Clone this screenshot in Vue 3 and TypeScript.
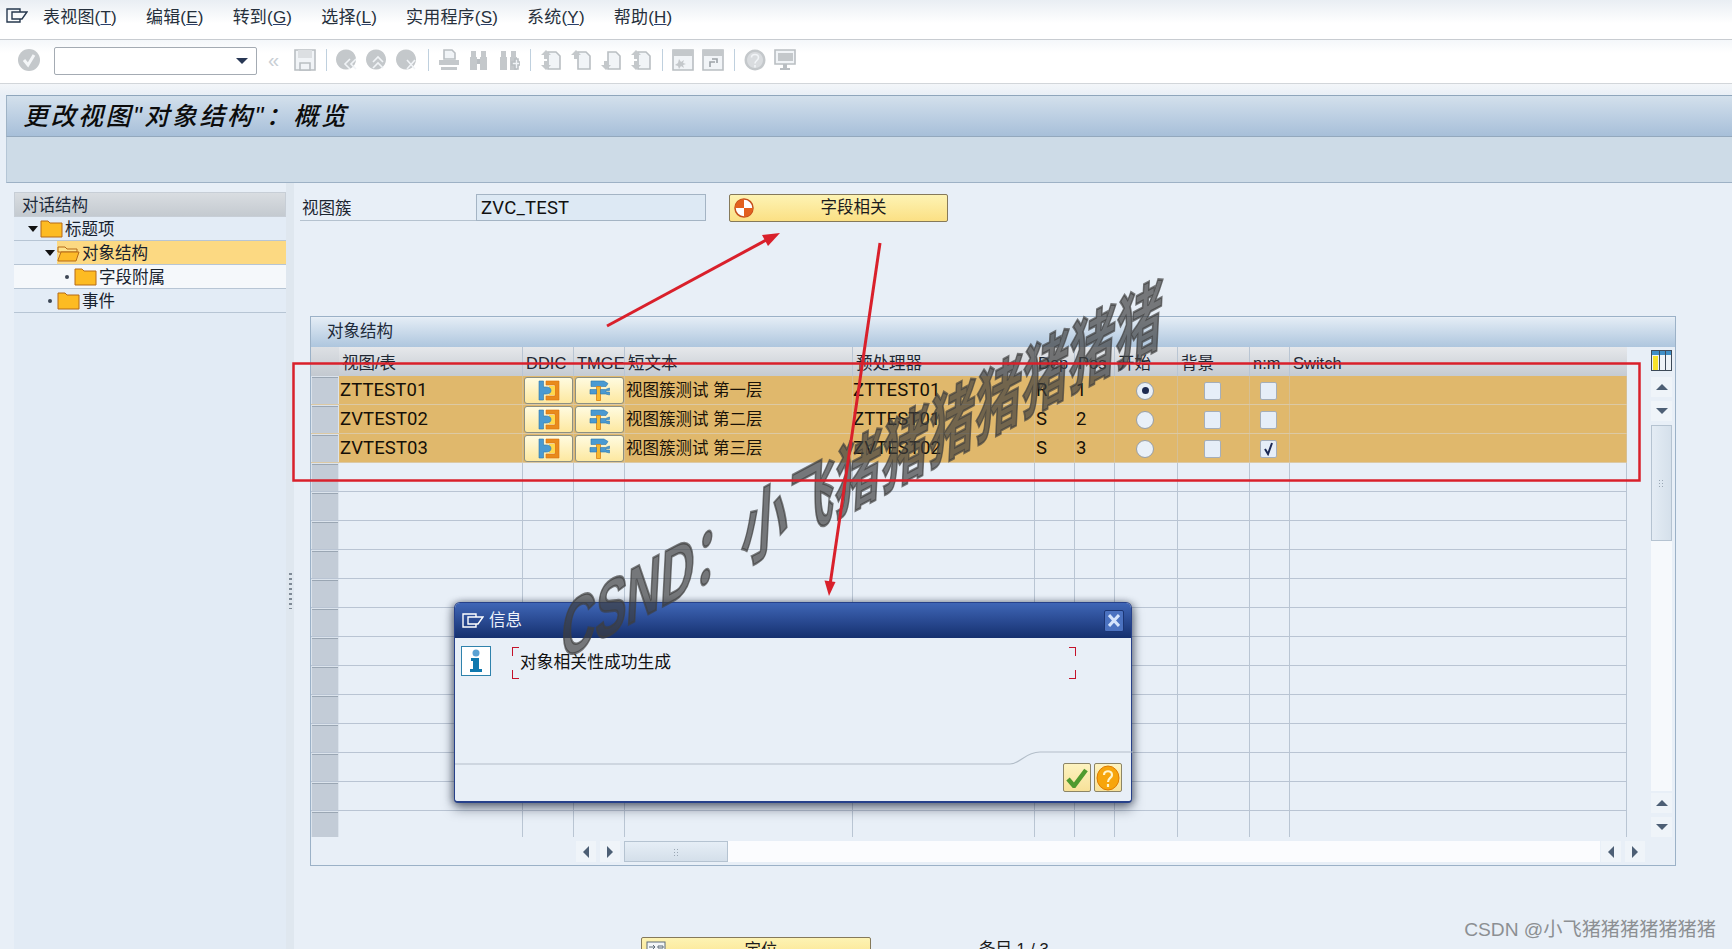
<script setup lang="ts">
interface Row { name: string; text: string; proc: string; dep: string; pos: string; start: boolean; nm: boolean }
interface Part { d: string; fill?: string; stroke?: string }
interface ToolIcon { sep?: boolean; parts?: Part[] }

const menus = [
  { label: '表视图(', key: 'T' }, { label: '编辑(', key: 'E' }, { label: '转到(', key: 'G' }, { label: '选择(', key: 'L' },
  { label: '实用程序(', key: 'S' }, { label: '系统(', key: 'Y' }, { label: '帮助(', key: 'H' },
]

const data: Row[] = [
  { name: 'ZTTEST01', text: '视图簇测试 第一层', proc: 'ZTTEST01', dep: 'R', pos: '1', start: true, nm: false },
  { name: 'ZVTEST02', text: '视图簇测试 第二层', proc: 'ZTTEST01', dep: 'S', pos: '2', start: false, nm: false },
  { name: 'ZVTEST03', text: '视图簇测试 第三层', proc: 'ZVTEST02', dep: 'S', pos: '3', start: false, nm: true },
]
const emptyRows = 13

const tree = [
  { label: '标题项', level: 0, open: true, sel: false, tone: 'a' },
  { label: '对象结构', level: 1, open: true, sel: true, tone: 'a' },
  { label: '字段附属', level: 2, open: false, sel: false, tone: 'b' },
  { label: '事件', level: 1, open: false, sel: false, tone: 'a' },
]

const G = '#c4c8cb'
const L = '#f1f4f7'
const O = '#b9bec2'
const circle = 'M10 .5a10 10 0 1 0 .01 0z'
const page = 'M8 3h8l4 4v13H8z'
const up = 'M6 1l5 5H8v4H4V6H1z'
const down = 'M4 12h4v4h3l-5 5-5-5h3z'
const tools: ToolIcon[] = [
  { parts: [{ d: 'M1 1h20v20H1z', fill: L, stroke: O }, { d: 'M4 1h14v8H4z', fill: '#dcdfe2' }, { d: 'M6 14h10v7H6z', fill: L, stroke: O }] },
  { sep: true },
  { parts: [{ d: circle, fill: G }, { d: 'M14 10l-5 5 5 5M20 10l-5 5 5 5', stroke: L }] },
  { parts: [{ d: circle, fill: G }, { d: 'M7 13l5-5 5 5M7 19l5-5 5 5', stroke: L }] },
  { parts: [{ d: circle, fill: G }, { d: 'M11 11l8 9M19 11l-8 9', stroke: L }] },
  { sep: true },
  { parts: [{ d: 'M6 1h8l3 3v6H6z', fill: L, stroke: O }, { d: 'M1 11h20v5H1z', fill: G }, { d: 'M3 18h16v3H3z', fill: G }] },
  { parts: [{ d: 'M3 2h5v6h1v13H2V8h1zM13 2h5v6h1v13h-7V8h1z', fill: G }, { d: 'M9 10h3v5H9z', fill: O }] },
  { parts: [{ d: 'M3 2h5v6h1v13H2V8h1zM13 2h5v6h1v13h-7V8h1z', fill: G }, { d: 'M14 13h3v-3h3v3h2v3h-2v4h-3v-4h-3z', fill: L, stroke: O }] },
  { sep: true },
  { parts: [{ d: page, fill: L, stroke: O }, { d: up, fill: G }, { d: down, fill: G }] },
  { parts: [{ d: page, fill: L, stroke: O }, { d: up, fill: G }] },
  { parts: [{ d: page, fill: L, stroke: O }, { d: down, fill: G }] },
  { parts: [{ d: page, fill: L, stroke: O }, { d: up, fill: G }, { d: down, fill: G }] },
  { sep: true },
  { parts: [{ d: 'M1 1h20v20H1z', fill: L, stroke: O }, { d: 'M1 1h20v6H1z', fill: G }, { d: 'M7 10l2 3 3-2-1 3 3 1-3 1 1 3-3-2-2 3-1-3-3-1 3-2z', fill: G }] },
  { parts: [{ d: 'M1 1h20v20H1z', fill: L, stroke: O }, { d: 'M1 1h20v6H1z', fill: G }, { d: 'M8 18v-5h5M10 10h5v4', stroke: '#9da3a8' }] },
  { sep: true },
  { parts: [{ d: 'M11 .5a10.5 10.5 0 1 0 .01 0z', fill: G }, { d: 'M11 3a8 8 0 1 0 .01 0z', fill: '#d9dcdf' }, { d: 'M7.500 8.500c0-4 7-4 7 0 0 3-3.500 3-3.500 6M11 16v2.500', stroke: L }] },
  { parts: [{ d: 'M1 1h20v14H1z', fill: L, stroke: O }, { d: 'M4 4h15v8H4z', fill: G }, { d: 'M9 15h4v4h3v2H6v-2h3z', fill: O }] },
]
</script>

<template>
  <div class="page">
    <header class="menubar">
      <svg class="app-icon" width="22" height="15" viewBox="0 0 22 15" fill="none" stroke="#26384e" stroke-width="1.4">
        <path d="M14 4V1H1v13h13v-3M6 4h15l-5 7H6z" />
      </svg>
      <nav class="menus">
        <span v-for="m in menus" :key="m.key" class="menu">{{ m.label }}<u>{{ m.key }}</u>)</span>
      </nav>
    </header>

    <div class="toolbar">
      <svg class="ok-icon" width="22" height="22" viewBox="0 0 22 22">
        <circle cx="11" cy="11" r="11" fill="#c4c8cb" />
        <path d="M6 11l4 5 6-10" fill="none" stroke="#f4f6f8" stroke-width="3" />
      </svg>
      <div class="combo"><i class="tri-down dark"></i></div>
      <span class="chev">«</span>
      <div class="tools">
        <template v-for="(t, i) in tools" :key="i">
          <span v-if="t.sep" class="tool-sep"></span>
          <svg v-else width="22" height="22" viewBox="0 0 22 22" stroke-width="1.6">
            <path v-for="(p, n) in t.parts" :key="n" :d="p.d" :fill="p.fill ?? 'none'" :stroke="p.stroke ?? 'none'" />
          </svg>
        </template>
      </div>
    </div>

    <div class="title-gap"></div>
    <h1 class="title">更改视图"对象结构"：概览</h1>
    <div class="app-toolbar"></div>

    <div class="body">
      <aside class="tree">
        <div class="tree-head">对话结构</div>
        <div v-for="n in tree" :key="n.label" class="tree-row" :class="['tone-' + n.tone, 'lv-' + n.level]">
          <span class="expander">
            <i v-if="n.open" class="tri-down black"></i>
            <i v-else class="dot"></i>
          </span>
          <span class="node" :class="{ sel: n.sel }">
            <svg width="23" height="18" viewBox="0 0 23 18">
              <template v-if="n.sel">
                <path d="M1 3h7l2 2h10v3H1z" fill="#ffe38a" stroke="#b56a18" />
                <path d="M1 16l3-8h18l-3 9H1z" fill="#fdbb28" stroke="#b56a18" />
              </template>
              <path v-else d="M1 1h7l2 2h12v14H1z" fill="#fdbb22" stroke="#b56a18" />
            </svg>
            <span class="node-label">{{ n.label }}</span>
          </span>
        </div>
      </aside>

      <div class="sash"><span class="sash-grip"></span></div>

      <main class="main">
        <div class="form-row">
          <label class="form-label">视图簇</label>
          <div class="form-value">ZVC_TEST</div>
          <button class="btn-wide field-btn">
            <svg width="20" height="20" viewBox="0 0 20 20">
              <circle cx="10" cy="10" r="9" fill="#fff" stroke="#c5501c" stroke-width="1.5" />
              <path d="M10 1a9 9 0 0 0-9 9h9zM10 10h9a9 9 0 0 1-9 9z" fill="#e2601e" />
            </svg>
            <span class="btn-text">字段相关</span>
          </button>
        </div>

        <section class="tc">
          <div class="tc-title">对象结构</div>
          <div class="tc-main">
            <div class="grid">
              <div class="tr th">
                <div class="sel-cell"></div>
                <div class="c">视图/表</div><div class="c">DDIC</div><div class="c">TMGE</div><div class="c">短文本</div>
                <div class="c">预处理器</div><div class="c">Dep</div><div class="c">Pos</div><div class="c">开始</div>
                <div class="c">背景</div><div class="c">n:m</div><div class="c">Switch</div>
              </div>
              <div v-for="r in data" :key="r.name" class="tr td picked">
                <div class="sel-cell"><span></span></div>
                <div class="c mono">{{ r.name }}</div>
                <div class="c cbtn">
                  <button class="cell-btn">
                    <svg width="23" height="21" viewBox="0 0 23 21">
                      <path d="M9 1h13v19H9v-4h9V5H9z" fill="#e98a1c" stroke="#d96e10" stroke-width=".6" />
                      <path d="M12 6h6v9h-6z" fill="#ffd84d" />
                      <path d="M2 1h4.500v6h2.500c3 0 5 1 5 3.500S12 14 9 14H6.500v6H2z" fill="#4a9ad2" stroke="#2d77ad" stroke-width=".6" />
                    </svg>
                  </button>
                </div>
                <div class="c cbtn">
                  <button class="cell-btn">
                    <svg width="23" height="21" viewBox="0 0 23 21">
                      <path d="M3 1h13l4 2.500L18 6.500H3z" fill="#4a9ad2" stroke="#2d77ad" stroke-width=".6" />
                      <path d="M8.500 6.500h4v14h-4z" fill="#f5b82e" stroke="#dc7f12" stroke-width=".8" />
                      <path d="M2 9.500h6.500V14H2z" fill="#4a9ad2" stroke="#2d77ad" stroke-width=".6" />
                      <path d="M12.500 9.500h5l4-1.500v2.500h-3.500v1.500H21.500V15l-4-1h-5z" fill="#4a9ad2" stroke="#2d77ad" stroke-width=".6" />
                    </svg>
                  </button>
                </div>
                <div class="c cjk">{{ r.text }}</div>
                <div class="c mono proc">{{ r.proc }}</div>
                <div class="c mono">{{ r.dep }}</div>
                <div class="c mono">{{ r.pos }}</div>
                <div class="c center"><span class="radio" :class="{ on: r.start }"></span></div>
                <div class="c center"><span class="check"></span></div>
                <div class="c center">
                  <span class="check">
                    <svg v-if="r.nm" width="13" height="15" viewBox="0 0 13 15"><path d="M3 8l3 5 4-11" fill="none" stroke="#1c2a55" stroke-width="2" /></svg>
                  </span>
                </div>
                <div class="c"></div>
              </div>
              <div v-for="n in emptyRows" :key="n" class="tr td">
                <div class="sel-cell"><span></span></div>
                <div v-for="k in 11" :key="k" class="c"></div>
              </div>
            </div>
            <div class="vscroll">
              <svg class="cols-icon" width="21" height="21" viewBox="0 0 21 21">
                <rect x=".5" y=".5" width="20" height="20" fill="#eef3f7" stroke="#3d4a58" />
                <rect x="1" y="1" width="19" height="4" fill="#3f8fc6" />
                <rect x="2" y="6" width="5" height="14" fill="#f7e32a" />
                <path d="M8.500 1v19M14.500 1v19" stroke="#3d4a58" />
              </svg>
              <span class="arrow-v"><i class="tri-up"></i></span>
              <span class="arrow-v"><i class="tri-down"></i></span>
              <div class="v-track">
                <div class="v-thumb"><i class="grip"></i></div>
              </div>
              <span class="arrow-v"><i class="tri-up"></i></span>
              <span class="arrow-v"><i class="tri-down"></i></span>
            </div>
          </div>
          <div class="hscroll">
            <span class="arrow-h"><i class="tri-left"></i></span>
            <span class="arrow-h"><i class="tri-right"></i></span>
            <div class="h-track">
              <div class="h-thumb"><i class="grip"></i></div>
            </div>
            <span class="arrow-h"><i class="tri-left"></i></span>
            <span class="arrow-h"><i class="tri-right"></i></span>
          </div>
        </section>

        <div class="bottom-row">
          <button class="btn-wide locate-btn">
            <svg width="20" height="20" viewBox="0 0 20 20">
              <rect x="1" y="1" width="18" height="18" fill="#f3f6f8" stroke="#5d6a78" />
              <path d="M3 6h6M7 4l2 2-2 2M12 5h5v2h-5z" fill="none" stroke="#5d6a78" />
            </svg>
            <span class="btn-text">定位</span>
          </button>
          <span class="entry">条目 1 / 3</span>
        </div>
      </main>
    </div>

    <div class="dialog">
      <div class="dlg-title">
        <svg width="22" height="15" viewBox="0 0 22 15" fill="none" stroke="#fff" stroke-width="1.4">
          <path d="M14 4V1H1v13h13v-3M6 4h15l-5 7H6z" />
        </svg>
        <span class="dlg-caption">信息</span>
        <span class="dlg-close">
          <svg width="12" height="13" viewBox="0 0 12 13"><path d="M1 1l10 11M11 1L1 12" stroke="#d5e4fb" stroke-width="3" /></svg>
        </span>
      </div>
      <div class="dlg-body">
        <svg class="info" width="30" height="30" viewBox="0 0 30 30">
          <rect x=".5" y=".5" width="29" height="29" fill="#fff" stroke="#2f82ac" />
          <circle cx="15" cy="7" r="3.500" fill="#5aa2d4" />
          <path d="M10 12h8v11h3v3H9v-3h3v-8h-2z" fill="#0f78ae" />
        </svg>
        <div class="dlg-msg">
          <span class="corner c-tl"></span><span class="corner c-tr"></span>
          <span class="corner c-bl"></span><span class="corner c-br"></span>
          对象相关性成功生成
        </div>
      </div>
      <svg class="dlg-line" width="678" height="20" viewBox="0 0 678 20" fill="none">
        <path d="M0 15H555C565 15 570 3 585 3H678" stroke="#b3bec9" stroke-width="1.200" />
      </svg>
      <div class="dlg-actions">
        <button class="dlg-btn">
          <svg width="22" height="20" viewBox="0 0 22 20"><path d="M2 11l6 7L20 2" fill="none" stroke="#4f9a2e" stroke-width="4.500" /></svg>
        </button>
        <button class="dlg-btn">
          <svg width="24" height="26" viewBox="0 0 24 26">
            <ellipse cx="12" cy="13" rx="11" ry="12" fill="#f7a50c" stroke="#e07c00" />
            <path d="M8 10c0-5 8-5 8 0 0 3-4 3-4 7M12 19v3" fill="none" stroke="#fff5cc" stroke-width="2.200" />
          </svg>
        </button>
      </div>
    </div>

    <div class="stamp">CSND：小飞猪猪猪猪猪猪猪</div>

    <svg class="marks" width="1732" height="949" viewBox="0 0 1732 949" fill="none">
      <rect x="293.500" y="363.500" width="1346" height="117" stroke="#d9202b" stroke-width="2.500" />
      <path d="M607 326L770 238" stroke="#d9202b" stroke-width="3" />
      <path d="M780 233L768 246L762 235Z" fill="#d9202b" />
      <path d="M880 243L830 585" stroke="#d9202b" stroke-width="3" />
      <path d="M829 596L835.500 582L824.500 580.500Z" fill="#d9202b" />
    </svg>

    <div class="credit">CSDN @小飞猪猪猪猪猪猪猪</div>
  </div>
</template>

<style>
html, body { margin: 0; background: #e8eff7; overflow: hidden; }
</style>

<style scoped>
.page { position: relative; width: 1732px; height: 949px; overflow: hidden; background: #e8eff7; color: #111; font: 16.5px/1.2 "Liberation Sans", "Noto Sans CJK SC", sans-serif; }
.menubar { height: 39px; display: flex; align-items: center; padding-left: 6px; background: linear-gradient(#e9eef3, #fff 60%); border-bottom: 1px solid #c8ccd1; }
.app-icon { margin-top: -9px; flex: none; }
.menus { display: flex; gap: 29px; margin-left: 15px; margin-top: -3px; color: #26303c; font-size: 17px; letter-spacing: .2px; }
.menu u { text-decoration-color: #2a3f6b; }
.toolbar { height: 43px; box-sizing: content-box; display: flex; align-items: center; background: linear-gradient(#f4f7fa, #fff 30%); border-bottom: 1px solid #d2d6da; padding-left: 18px; }
.ok-icon { flex: none; margin-top: -3px; }
.combo { width: 193px; height: 26px; margin: -2px 0 0 14px; background: #fff; border: 1px solid #a4abb3; border-radius: 2px; display: flex; align-items: center; justify-content: flex-end; padding-right: 8px; }
.chev { margin: -4px 0 0 11px; width: 15px; color: #c8ced4; font-size: 20px; line-height: 20px; }
.tools { display: flex; align-items: center; gap: 8px; margin: -4px 0 0 11px; }
.tool-sep { width: 1px; height: 22px; margin: 0 1.500px; background: #bfd0de; }
.title-gap { height: 11px; background: linear-gradient(#f3f6f9, #e9eff6); }
.title { height: 42px; margin: 0 0 0 6px; box-sizing: border-box; padding-left: 16px; display: flex; align-items: center; background: linear-gradient(#d3e0ec, #a7bfd9); border-top: 1px solid #8fa6bc; border-bottom: 1px solid #93a8bd; border-left: 1px solid #9fb3c6; font-size: 25px; font-style: italic; font-weight: 500; letter-spacing: 2.500px; color: #0c0c0c; white-space: nowrap; }
.app-toolbar { height: 46px; margin-left: 6px; box-sizing: border-box; background: #cddbe7; border-bottom: 1px solid #9db1c5; border-left: 1px solid #b5c6d6; }
.body { display: flex; height: 767px; }
.tree { width: 272px; margin: 9px 0 0 14px; background: #e2ebf5; flex: none; }
.tree-head { height: 25px; box-sizing: border-box; padding-left: 7px; line-height: 24px; background: linear-gradient(#d9dde1, #c4cad0); border: 1px solid #c7ced6; color: #1c2a3a; }
.tree-row { height: 24px; box-sizing: border-box; display: flex; align-items: stretch; border-bottom: 1px solid #b7c5d4; }
.tone-a { background: #e3ecf6; }
.tone-b { background: #f5f8fb; }
.lv-0 { padding-left: 11px; }
.lv-1 { padding-left: 28px; }
.lv-2 { padding-left: 45px; }
.expander { width: 15px; display: flex; align-items: center; justify-content: center; }
.node { flex: 1; display: flex; align-items: center; gap: 3px; }
.node.sel { background: #fcd982; }
.node-label { margin: 2px 0 0 -1px; color: #18222e; }
.dot { width: 4px; height: 4px; background: #3c4654; border-radius: 50%; }
.sash { width: 8px; flex: none; background: #dfe7ef; display: flex; align-items: flex-start; justify-content: center; }
.sash-grip { width: 3px; height: 36px; margin-top: 390px; background: repeating-linear-gradient(#7f8a96 0 2px, transparent 2px 5px); }
.main { flex: 1; min-width: 0; }
.form-row { display: flex; align-items: flex-start; margin: 11px 0 0 6px; height: 28px; }
.form-label { width: 176px; height: 27px; box-sizing: border-box; padding-left: 2px; line-height: 29px; border-bottom: 1px solid #b5c2cf; color: #1c2530; }
.form-value { width: 230px; height: 27px; box-sizing: border-box; padding-left: 4px; line-height: 26px; background: #dde9f4; border: 1px solid #a4b4c4; font-family: Roboto, "Liberation Sans", sans-serif; font-size: 18.500px; letter-spacing: .2px; }
.btn-wide { display: flex; align-items: center; padding: 0 0 0 4px; box-sizing: border-box; height: 28px; background: linear-gradient(#fdf3b4, #fbe084); border: 1px solid #85795a; border-radius: 2px; font: inherit; color: #1c1c1c; }
.field-btn { width: 219px; margin-left: 23px; }
.btn-text { flex: 1; text-align: center; }
.field-btn .btn-text { padding-left: 6px; }
.locate-btn .btn-text { padding-right: 14px; }
.tc { width: 1366px; height: 550px; box-sizing: border-box; margin: 94px 0 0 16px; border: 1px solid #9bb1c7; padding-top: 1px; display: flex; flex-direction: column; }
.tc-title { height: 29px; flex: none; box-sizing: border-box; padding-left: 16px; line-height: 26px; background: linear-gradient(#e3ecf5, #aec6de); color: #1d2a3a; }
.tc-main { display: flex; height: 490px; flex: none; }
.grid { width: 1316px; height: 490px; overflow: hidden; flex: none; }
.tr { display: grid; grid-template-columns: 28px 184px 51px 51px 228px 182px 40px 40px 63px 72px 40px 337px; height: 29px; box-sizing: border-box; }
.c { box-sizing: border-box; border-right: 1px solid #b9c5d3; padding-left: 1px; white-space: nowrap; overflow: hidden; line-height: 28px; }
.th { background: linear-gradient(#e6e8eb, #c5cbd2); }
.th .c { padding-left: 3px; line-height: 32px; color: #1e2732; }
.th .c:last-child { border-right: none; }
.td { border-bottom: 1px solid #b9c4d3; }
.sel-cell { background: #dbe3ec; padding: 1px 1px 0 1px; box-sizing: border-box; }
.th .sel-cell { background: linear-gradient(#dde0e4, #c3c9d0); }
.sel-cell span { display: block; height: 26px; background: #c3ccd7; border-top: 1px solid #9aa6b3; }
.picked > .c { background: #e0b86c; border-right-color: #d6bf94; }
.picked { border-bottom-color: #dcc9a4; }
.mono { font-family: Roboto, "Liberation Sans", sans-serif; font-size: 18.500px; letter-spacing: .1px; color: #151008; padding-left: 1px; line-height: 29px; }
.proc { padding-left: 0; }
.cjk { padding-left: 1px; color: #191208; }
.center { display: flex; align-items: center; justify-content: center; padding: 1px 3px 0 1px; }
.cbtn { padding: 0; display: flex; justify-content: center; align-items: center; }
.cell-btn { width: 49px; height: 27px; padding: 0; display: flex; align-items: center; justify-content: center; background: linear-gradient(#fffbe0, #fde8a0); border: 1px solid #8c8f82; border-radius: 3px; }
.radio { width: 18px; height: 18px; box-sizing: border-box; border: 1px solid #969ea8; border-radius: 50%; background: #e9f0f8; display: flex; align-items: center; justify-content: center; }
.radio.on::after { content: ""; width: 7px; height: 7px; border-radius: 50%; background: #1d2a50; }
.check { width: 17px; height: 18px; box-sizing: border-box; border: 1px solid #a5aeb9; border-radius: 2px; background: #e6eef8; display: flex; align-items: center; justify-content: center; }
.vscroll { width: 48px; flex: none; box-sizing: border-box; padding: 3px 3px 0 24px; display: flex; flex-direction: column; align-items: stretch; }
.cols-icon { flex: none; margin-bottom: 6px; }
.arrow-v { height: 20px; flex: none; margin-bottom: 4px; background: #eff4f9; display: flex; align-items: center; justify-content: center; }
.arrow-v:last-child { margin-bottom: 0; }
.v-track { flex: 1; background: #f6f9fc; margin: 0 0 2px; }
.v-thumb { height: 116px; box-sizing: border-box; background: linear-gradient(90deg, #e4ecf4, #d5e0eb); border: 1px solid #b5c3d1; display: flex; align-items: center; justify-content: center; }
.grip { width: 7px; height: 8px; background: radial-gradient(circle, #9aa7b4 0 1px, transparent 1px) 0 0 / 3px 3px; }
.hscroll { display: flex; height: 21px; margin: 4px 0 0 265px; gap: 4px; flex: none; }
.arrow-h { width: 20px; flex: none; background: #eff4f9; display: flex; align-items: center; justify-content: center; }
.h-track { width: 976px; margin-right: -3px; background: #fbfcfe; }
.h-thumb { width: 104px; height: 21px; box-sizing: border-box; background: linear-gradient(#e6eef6, #d4dfea); border: 1px solid #b5c3d1; display: flex; align-items: center; justify-content: center; }
.tri-up, .tri-down, .tri-left, .tri-right { width: 0; height: 0; display: block; border-style: solid; border-color: transparent; }
.tri-up { border-width: 0 6px 6px; border-bottom-color: #4d5f75; }
.tri-down { border-width: 6px 6px 0; border-top-color: #4d5f75; }
.tri-left { border-width: 6px 6px 6px 0; border-right-color: #4d5f75; }
.tri-right { border-width: 6px 0 6px 6px; border-left-color: #4d5f75; }
.tri-down.dark { border-top-color: #283754; }
.tri-down.black { border-width: 6px 5px 0; border-top-color: #111; }
.bottom-row { display: flex; align-items: flex-start; margin: 71px 0 0 347px; }
.locate-btn { width: 230px; flex: none; }
.entry { margin-left: 108px; margin-top: 3px; color: #1a1a1a; }
.dialog { position: absolute; left: 454px; top: 602px; width: 678px; height: 201px; box-sizing: border-box; display: flex; flex-direction: column; background: #e8eff7; border: 1px solid #27418a; border-bottom-width: 2px; border-radius: 6px 6px 4px 4px; box-shadow: 0 6px 12px rgba(30, 40, 60, .5), 3px 0 6px rgba(30, 40, 60, .3), -3px 0 6px rgba(30, 40, 60, .3); }
.dlg-title { height: 35px; flex: none; display: flex; align-items: center; padding: 0 7px; background: linear-gradient(#3f66b6, #28488f 55%, #15306e); border-radius: 5px 5px 0 0; color: #fff; }
.dlg-caption { margin-left: 5px; flex: 1; color: #eef3fb; }
.dlg-close { width: 20px; height: 22px; box-sizing: border-box; border: 1px solid #1c3674; border-radius: 2px; background: #4b72c0; display: flex; align-items: center; justify-content: center; }
.dlg-body { display: flex; padding: 8px 0 0 6px; flex: 1; align-items: flex-start; }
.info { flex: none; }
.dlg-msg { position: relative; width: 564px; height: 32px; margin: 1px 0 0 21px; box-sizing: border-box; padding: 5px 0 0 8px; font-size: 16.800px; line-height: 22px; color: #111; }
.corner { position: absolute; width: 6px; height: 8px; border: 0 solid #c4122a; }
.c-tl { left: 0; top: 0; border-width: 1.500px 0 0 1.500px; }
.c-tr { right: 0; top: 0; border-width: 1.500px 1.500px 0 0; }
.c-bl { left: 0; bottom: 0; border-width: 0 0 1.500px 1.500px; }
.c-br { right: 0; bottom: 0; border-width: 0 1.500px 1.500px 0; }
.dlg-line { position: absolute; left: 0; top: 146px; }
.dlg-actions { display: flex; gap: 3px; justify-content: flex-end; padding: 0 9px 9px 0; }
.dlg-btn { width: 28px; height: 29px; padding: 0; display: flex; align-items: center; justify-content: center; background: linear-gradient(#fdf3c0, #f7e199); border: 1px solid #8c8566; border-radius: 2px; }
.stamp { position: absolute; left: 562px; top: 594px; white-space: nowrap; font-size: 78px; line-height: 78px; font-weight: 700; color: rgba(62, 62, 62, .68); -webkit-text-stroke: 2.500px rgba(62, 62, 62, .68); transform-origin: 0 50%; transform: skewY(-28deg) skewX(-3deg) scaleX(.6); }
.marks { position: absolute; left: 0; top: 0; pointer-events: none; }
.credit { position: absolute; right: 16px; top: 918px; font-size: 19.200px; line-height: 24px; color: #8c8f93; white-space: nowrap; }
</style>
